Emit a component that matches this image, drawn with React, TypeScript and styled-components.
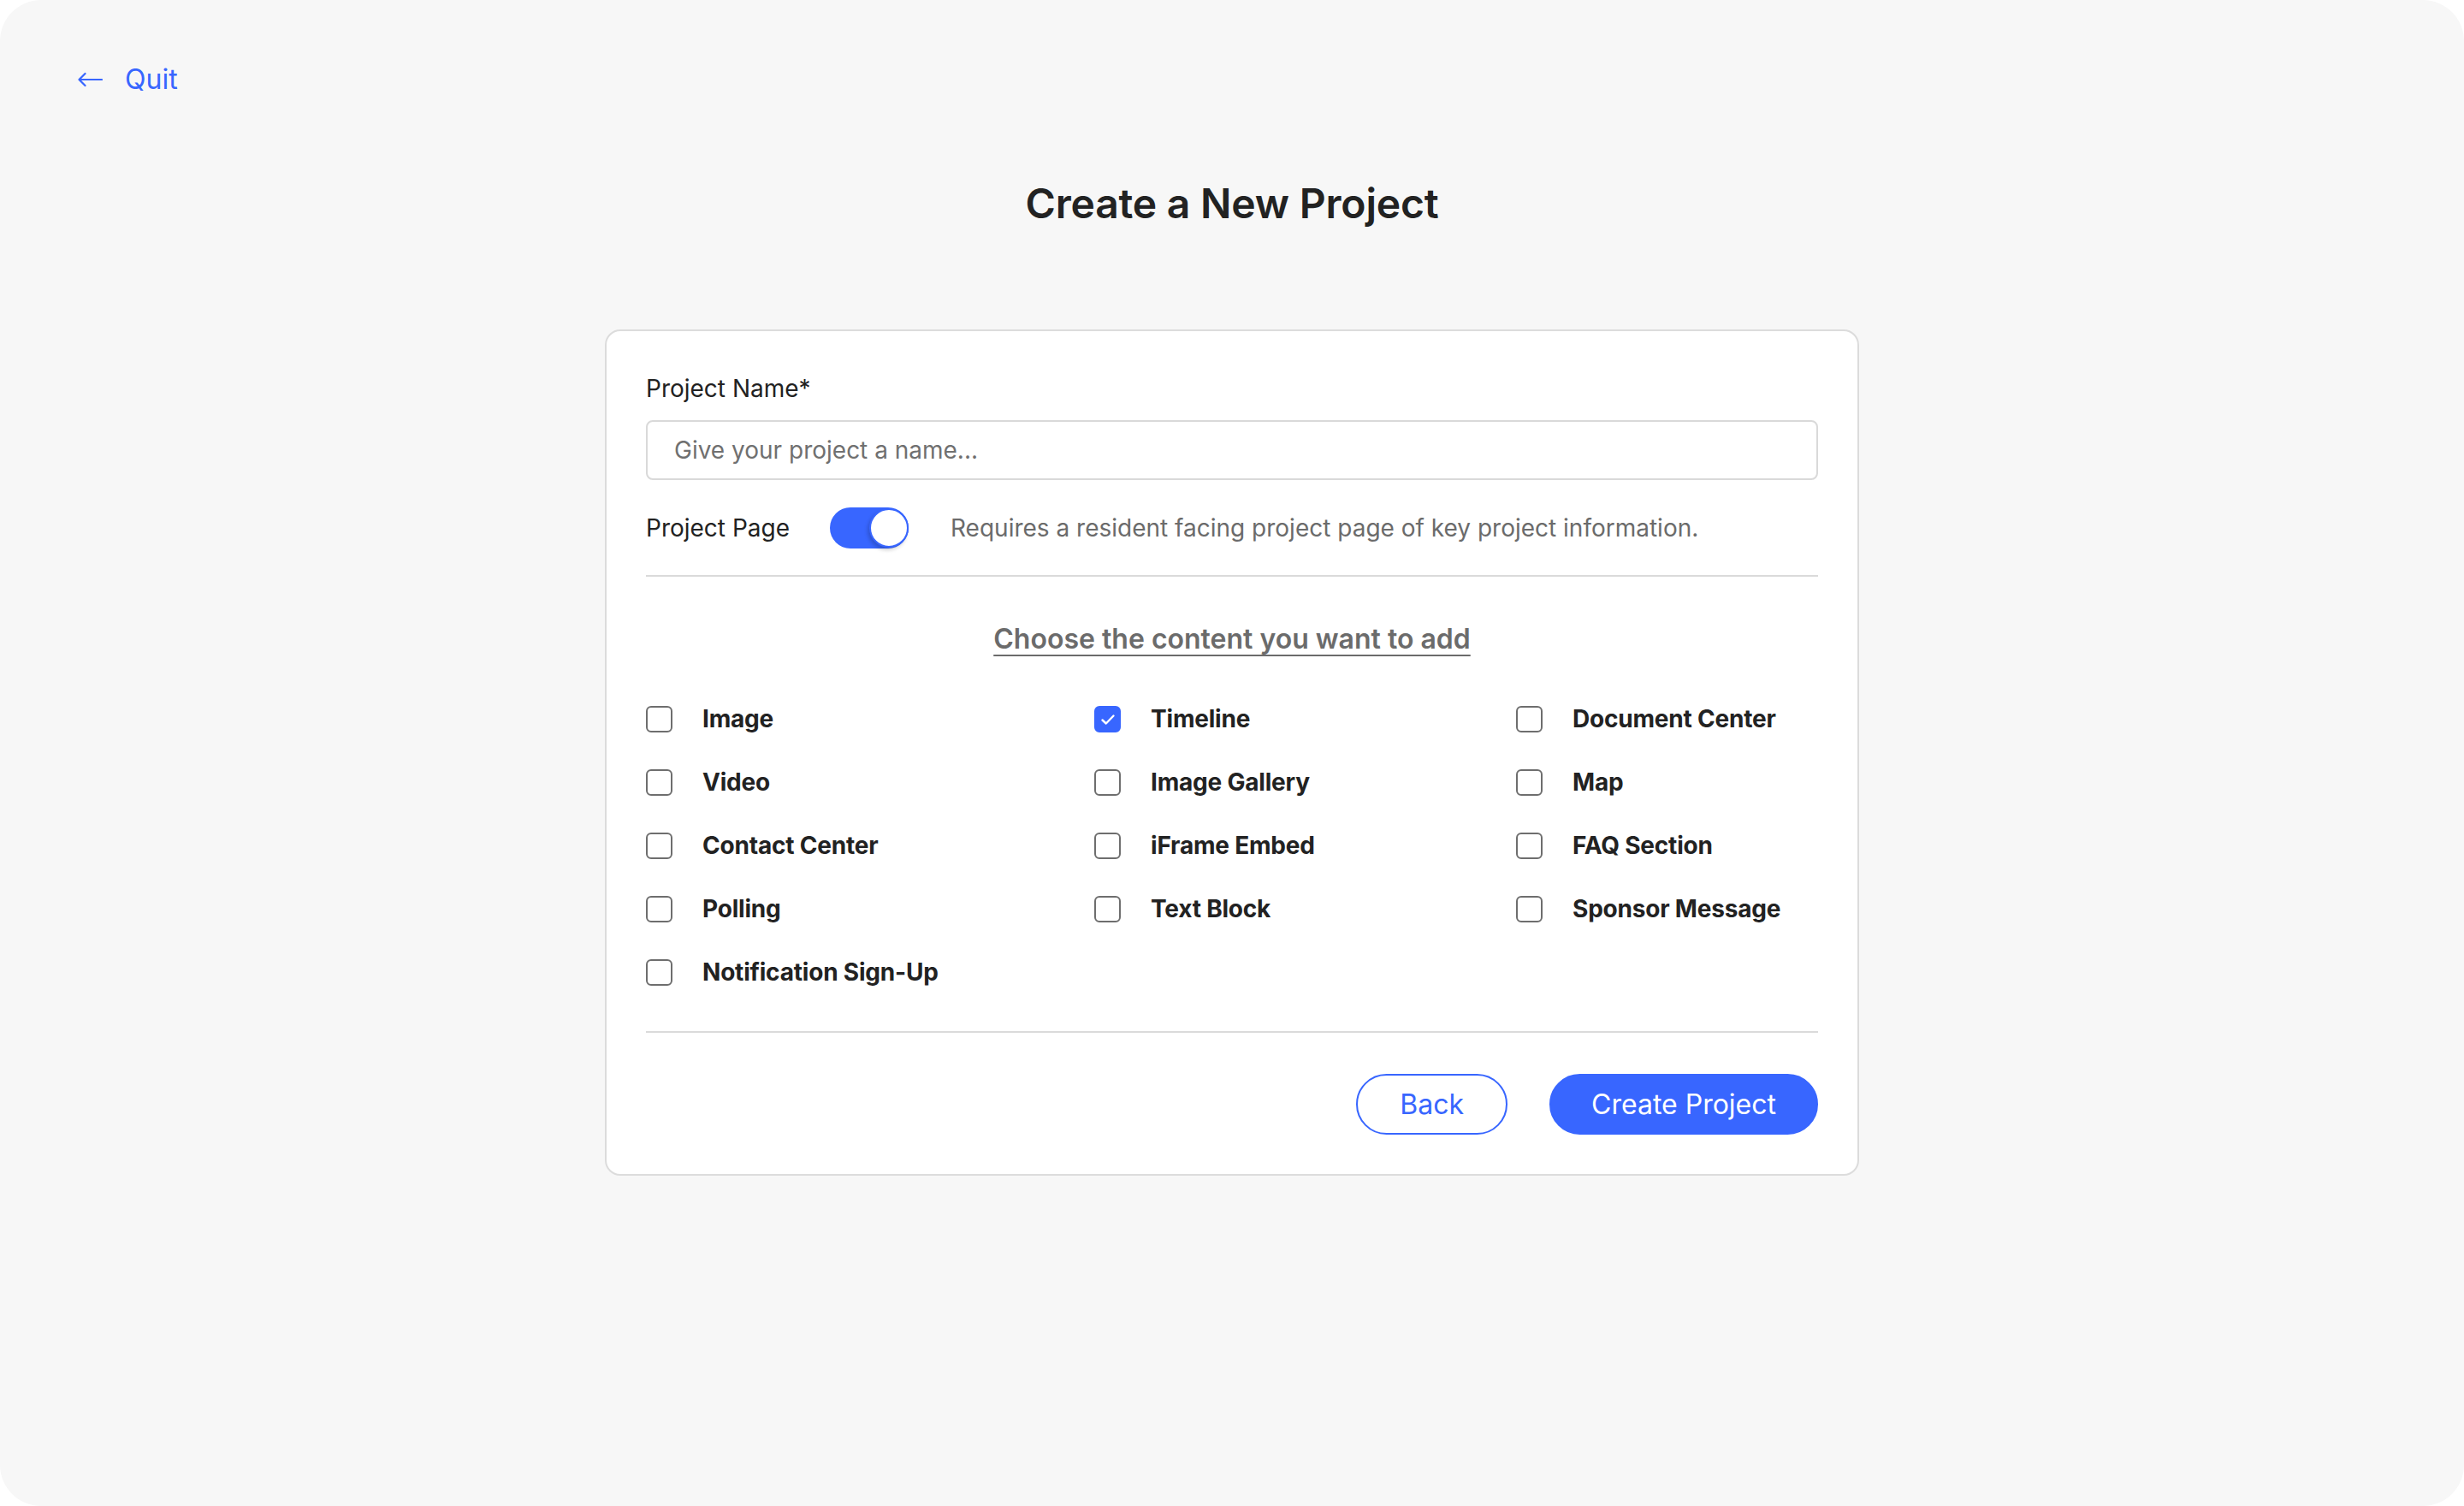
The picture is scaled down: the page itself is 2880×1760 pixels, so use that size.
import React, { useState } from "react";
import styled, { createGlobalStyle } from "styled-components";

const GlobalStyle = createGlobalStyle`
  * { box-sizing: border-box; }
  html, body { margin: 0; padding: 0; background: #ffffff; }
  body { font-family: Inter, "Noto Sans", "Liberation Sans", sans-serif; color: #222222; }
`;

const BLUE = "#3866ff";

const Frame = styled.div`
  width: 2880px;
  height: 1760px;
  background: #f7f7f7;
  border-radius: 48px;
  overflow: hidden;
  display: flex;
  flex-direction: column;
`;

const Header = styled.header`
  padding: 73px 0 0 90px;
  display: flex;
`;

const QuitLink = styled.a`
  display: flex;
  align-items: center;
  gap: 26px;
  height: 40px;
  color: ${BLUE};
  font-size: 32px;
  line-height: 40px;
  text-decoration: none;
  cursor: pointer;
`;

const Title = styled.h1`
  margin: 96px 0 0;
  text-align: center;
  font-size: 48px;
  line-height: 58px;
  font-weight: 600;
  color: #222222;
  letter-spacing: -0.2px;
`;

const Card = styled.section`
  align-self: center;
  width: 1466px;
  margin-top: 118px;
  background: #ffffff;
  border: 2px solid #dcdcdc;
  border-radius: 18px;
  padding: 50px 46px 46px;
  display: flex;
  flex-direction: column;
`;

const FieldLabel = styled.label`
  font-size: 28px;
  line-height: 34px;
  color: #222222;
`;

const TextInput = styled.input`
  margin-top: 20px;
  height: 70px;
  width: 100%;
  border: 2px solid #d9d9d9;
  border-radius: 8px;
  padding: 0 31px;
  font-family: inherit;
  font-size: 28px;
  color: #222222;
  background: #ffffff;
  outline: none;
  &::placeholder { color: #707070; }
`;

const ToggleRow = styled.div`
  margin-top: 32px;
  height: 48px;
  display: flex;
  align-items: center;
`;

const ToggleLabel = styled.span`
  width: 215px;
  font-size: 28px;
  line-height: 34px;
  color: #222222;
`;

const Track = styled.button<{ $on: boolean }>`
  width: 92px;
  height: 48px;
  border: none;
  border-radius: 24px;
  padding: 1px 0;
  background: ${(p) => (p.$on ? BLUE : "#cfcfcf")};
  display: flex;
  align-items: center;
  justify-content: ${(p) => (p.$on ? "flex-end" : "flex-start")};
  cursor: pointer;
  margin-right: 49px;
`;

const Knob = styled.span`
  width: 46px;
  height: 46px;
  border-radius: 50%;
  background: #ffffff;
  border: 2px solid ${BLUE};
  box-shadow: -2px 3px 4px rgba(0, 0, 0, 0.18);
`;

const Hint = styled.span`
  font-size: 28px;
  line-height: 34px;
  color: #6b6b6b;
`;

const Divider = styled.hr<{ $top: number }>`
  margin: ${(p) => p.$top}px 0 0;
  border: none;
  height: 2px;
  background: #dadada;
`;

const SectionHeading = styled.h2`
  margin: 54px 0 0;
  text-align: center;
  font-size: 32px;
  line-height: 38px;
  font-weight: 600;
  color: #6b6b6b;
  text-decoration: underline;
  text-decoration-thickness: 2px;
  text-underline-offset: 7px;
`;

const OptionGrid = styled.div`
  margin-top: 59px;
  display: grid;
  grid-template-columns: 524px 493px 1fr;
  row-gap: 43px;
`;

const Option = styled.label`
  display: flex;
  align-items: center;
  gap: 35px;
  height: 31px;
  cursor: pointer;
`;

const Box = styled.span<{ $checked: boolean }>`
  width: 31px;
  height: 31px;
  flex: none;
  border-radius: 6px;
  border: 2px solid ${(p) => (p.$checked ? BLUE : "#6e6e6e")};
  background: ${(p) => (p.$checked ? BLUE : "#ffffff")};
  display: flex;
  align-items: center;
  justify-content: center;
`;

const OptionText = styled.span`
  font-size: 28px;
  line-height: 31px;
  font-weight: 700;
  color: #222222;
  letter-spacing: -0.2px;
`;

const Actions = styled.div`
  margin-top: 48px;
  display: flex;
  justify-content: flex-end;
  gap: 49px;
`;

const Button = styled.button<{ $primary?: boolean }>`
  height: 71px;
  padding: 0 ${(p) => (p.$primary ? 47 : 49)}px;
  border-radius: 36px;
  border: 2px solid ${BLUE};
  background: ${(p) => (p.$primary ? BLUE : "#ffffff")};
  color: ${(p) => (p.$primary ? "#ffffff" : BLUE)};
  font-family: inherit;
  font-size: 32px;
  cursor: pointer;
`;

const options = [
  "Image",
  "Timeline",
  "Document Center",
  "Video",
  "Image Gallery",
  "Map",
  "Contact Center",
  "iFrame Embed",
  "FAQ Section",
  "Polling",
  "Text Block",
  "Sponsor Message",
  "Notification Sign-Up",
];

const ArrowLeft = () => (
  <svg width="30" height="18" viewBox="0 0 30 18" fill="none">
    <path d="M29 9H2.5M9.5 2L2.5 9L9.5 16" stroke={BLUE} strokeWidth="2.2" strokeLinecap="round" strokeLinejoin="round" />
  </svg>
);

const Check = () => (
  <svg width="18" height="14" viewBox="0 0 18 14" fill="none">
    <path d="M2.5 7.5L6.8 11.5L15.5 2.5" stroke="#ffffff" strokeWidth="2.4" strokeLinecap="round" strokeLinejoin="round" />
  </svg>
);

export default function App() {
  const [checked, setChecked] = useState<Record<string, boolean>>({ Timeline: true });
  const [pageOn, setPageOn] = useState(true);

  return (
    <>
      <GlobalStyle />
      <Frame>
        <Header>
          <QuitLink>
            <ArrowLeft />
            Quit
          </QuitLink>
        </Header>
        <Title>Create a New Project</Title>
        <Card>
          <FieldLabel>Project Name*</FieldLabel>
          <TextInput placeholder="Give your project a name..." />
          <ToggleRow>
            <ToggleLabel>Project Page</ToggleLabel>
            <Track $on={pageOn} onClick={() => setPageOn(!pageOn)}>
              <Knob />
            </Track>
            <Hint>Requires a resident facing project page of key project information.</Hint>
          </ToggleRow>
          <Divider $top={31} />
          <SectionHeading>Choose the content you want to add</SectionHeading>
          <OptionGrid>
            {options.map((o) => (
              <Option key={o} onClick={() => setChecked({ ...checked, [o]: !checked[o] })}>
                <Box $checked={!!checked[o]}>{checked[o] && <Check />}</Box>
                <OptionText>{o}</OptionText>
              </Option>
            ))}
          </OptionGrid>
          <Divider $top={53} />
          <Actions>
            <Button>Back</Button>
            <Button $primary>Create Project</Button>
          </Actions>
        </Card>
      </Frame>
    </>
  );
}
